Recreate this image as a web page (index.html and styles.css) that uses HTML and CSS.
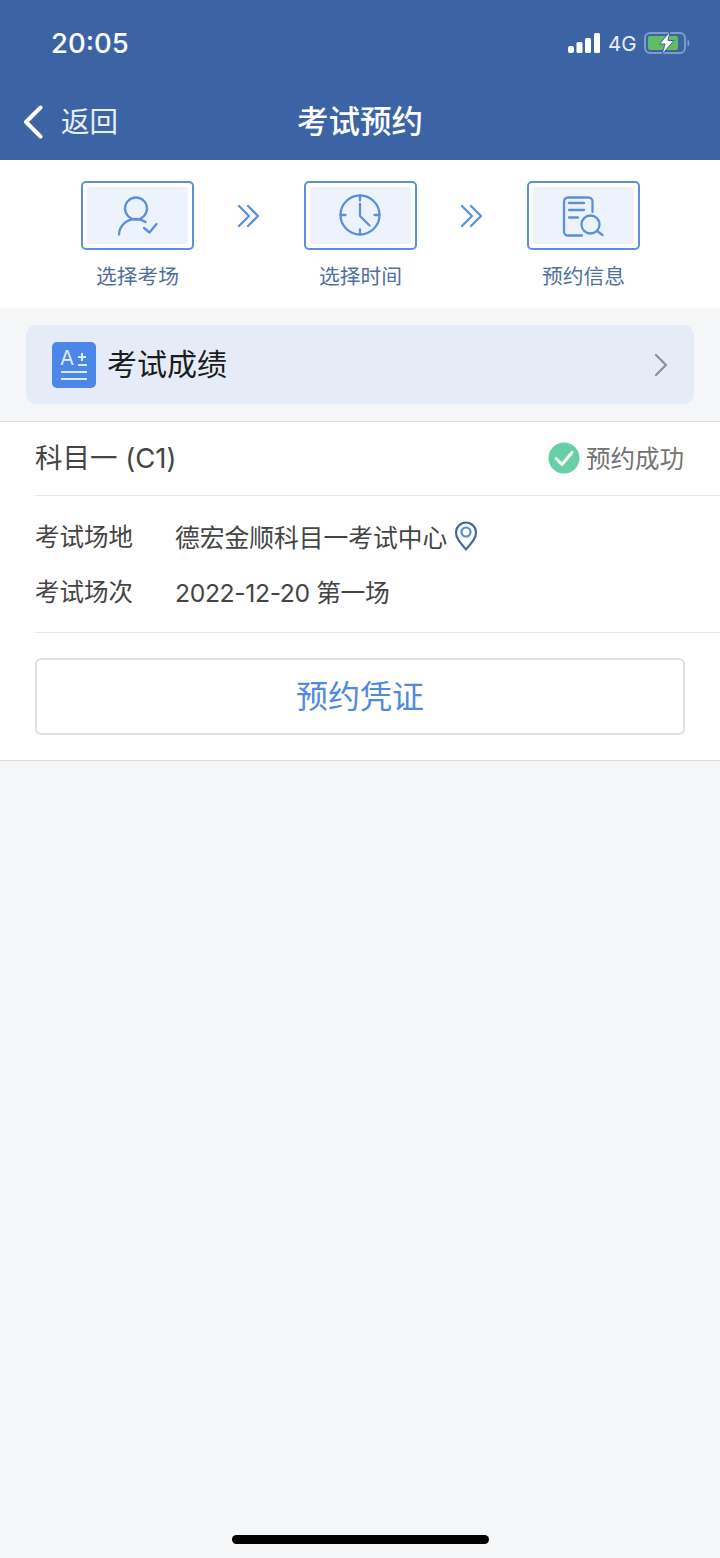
FILE: index.html
```html
<!DOCTYPE html>
<html>
  <head>
    <title>考试预约</title>
    <meta http-equiv="Content-Type" content="text/html; charset=UTF-8"/>
    <link rel="stylesheet" href="styles.css">
  </head>
  <body>
    <div class="page">
      <header class="header">
        <div class="status-bar">
          <span class="clock">20:05</span>
          <div class="status-icons">
            <svg class="signal" width="32" height="20" viewBox="0 0 32 20">
              <rect x="0" y="13" width="6" height="7" rx="2"/>
              <rect x="8.5" y="9" width="6" height="11" rx="1.5"/>
              <rect x="17" y="5" width="6" height="15" rx="1.5"/>
              <rect x="26" y="0" width="6" height="20" rx="1.5"/>
            </svg>
            <span class="network">4G</span>
            <svg class="battery" width="46" height="24" viewBox="0 0 46 24">
              <rect x="1" y="2" width="40" height="20" rx="5" fill="none" stroke="#7f9cc8" stroke-width="2"/>
              <rect x="4" y="5" width="30" height="14" rx="2" fill="#62bd62"/>
              <path d="M43.5 8.5c1.5.5 2 2 2 3.5s-.5 3-2 3.5z" fill="#7f9cc8"/>
              <path d="M26 .5L15.5 13H21l-3 10.5L30 9.5h-6z" fill="#fff" stroke="#3c64a5"/>
            </svg>
          </div>
        </div>
        <div class="nav-bar">
          <div class="back">
            <svg width="22" height="34" viewBox="0 0 22 34">
              <path d="M18.5 2.5L4 17l14.5 14.5" fill="none" stroke="#fff" stroke-width="4" stroke-linecap="round" stroke-linejoin="round"/>
            </svg>
            <span>返回</span>
          </div>
          <h1 class="nav-title">考试预约</h1>
        </div>
      </header>

      <section class="steps">
        <div class="step">
          <div class="step-box">
            <div class="step-inner">
              <svg class="step-icon" width="48" height="48" viewBox="0 0 48 48">
                <circle cx="22" cy="16.5" r="11"/>
                <path d="M5 42.5C5.5 33.500 12.500 27 22 27c3.500 0 6.500 1 9.500 3"/>
                <path d="M30 36l5.500 4.500 7-8.500"/>
              </svg>
            </div>
          </div>
          <span class="step-label">选择考场</span>
        </div>
        <div class="step-arrow">
          <svg class="step-icon" width="24" height="24" viewBox="0 0 24 24">
            <path d="M2 2l10 10L2 22M11 2l10 10-10 10"/>
          </svg>
        </div>
        <div class="step">
          <div class="step-box">
            <div class="step-inner">
              <svg class="step-icon" width="48" height="48" viewBox="0 0 48 48">
                <circle cx="23" cy="23" r="19.5"/>
                <path d="M23 3.5v5M23 37.5v5M3.5 23h5M37.5 23h5M23 12v12l9.5 9.5"/>
              </svg>
            </div>
          </div>
          <span class="step-label">选择时间</span>
        </div>
        <div class="step-arrow">
          <svg class="step-icon" width="24" height="24" viewBox="0 0 24 24">
            <path d="M2 2l10 10L2 22M11 2l10 10-10 10"/>
          </svg>
        </div>
        <div class="step">
          <div class="step-box">
            <div class="step-inner">
              <svg class="step-icon" width="48" height="48" viewBox="0 0 48 48">
                <path d="M32.5 20V9.5a4 4 0 0 0-4-4H8a4 4 0 0 0-4 4v30a4 4 0 0 0 4 4h14"/>
                <path d="M9 11h15M9 18h15M9 25.5h9"/>
                <circle cx="30.5" cy="32.5" r="9"/>
                <path d="M37 39l5.500 4"/>
              </svg>
            </div>
          </div>
          <span class="step-label">预约信息</span>
        </div>
      </section>

      <div class="score-wrap">
        <div class="score">
          <div class="score-icon">
            <span class="score-grade">A</span>
            <svg width="44" height="46" viewBox="0 0 44 46">
              <path d="M30 11v8M26 15h8M26 23h9M9 30h26M9 37h26" fill="none" stroke="#dfeafc" stroke-width="2"/>
            </svg>
          </div>
          <span class="score-text">考试成绩</span>
          <svg class="chevron" width="14" height="24" viewBox="0 0 14 24">
            <path d="M2 2l10 10L2 22" fill="none" stroke="#8b8f96" stroke-width="2.2" stroke-linecap="round" stroke-linejoin="round"/>
          </svg>
        </div>
      </div>

      <section class="card">
        <div class="card-head">
          <span class="subject">科目一 (C1)</span>
          <div class="result">
            <svg width="32" height="32" viewBox="0 0 32 32">
              <circle cx="16" cy="16" r="15.5" fill="#66cfa6"/>
              <path d="M8 16.5l6 6L24 10.5" fill="none" stroke="#fff" stroke-width="3" stroke-linecap="round" stroke-linejoin="round"/>
            </svg>
            <span>预约成功</span>
          </div>
        </div>
        <div class="card-body">
          <div class="row">
            <span class="row-label">考试场地</span>
            <span class="row-value">德宏金顺科目一考试中心</span>
            <svg class="pin" width="24" height="30" viewBox="0 0 24 30">
              <path d="M12 28.5C6 21.500 2 17 2 11.500a10 10 0 0 1 20 0C22 17 18 21.500 12 28.500z" fill="none" stroke="#44689f" stroke-width="2.2" stroke-linejoin="round"/>
              <circle cx="12" cy="11" r="4.5" fill="none" stroke="#4f8ae0" stroke-width="2.2"/>
            </svg>
          </div>
          <div class="row">
            <span class="row-label">考试场次</span>
            <span class="row-value row-date">2022-12-20 第一场</span>
          </div>
        </div>
        <div class="card-foot">
          <div class="voucher">预约凭证</div>
        </div>
      </section>

      <div class="home-bar"></div>
    </div>
  </body>
</html>
```

FILE: styles.css
```css
* {
  box-sizing: border-box;
}

body {
  margin: 0;
  font-family: 'Inter', 'Noto Sans CJK SC', sans-serif;
  background-color: #f5f6f8;
}

.page {
  display: flex;
  flex-direction: column;
  height: 1558px;
}

/* header */
.header {
  height: 160px;
  background-color: #3c64a5;
  color: #fff;
}

.status-bar {
  display: flex;
  align-items: center;
  justify-content: space-between;
  height: 86px;
  padding: 0 30px 0 51px;
}

.clock {
  font-size: 27.5px;
  font-weight: 500;
}

.status-icons {
  display: flex;
  align-items: center;
}

.signal {
  fill: #fff;
}

.network {
  width: 28px;
  margin: 0 8px;
  font-size: 20.5px;
  color: #e8eef8;
}

.nav-bar {
  display: grid;
  grid-template-columns: 1fr auto 1fr;
  align-items: center;
  height: 74px;
}

.back {
  display: flex;
  align-items: center;
  gap: 17px;
  margin-bottom: 2px;
  padding-left: 22px;
  font-size: 28.5px;
  line-height: 34px;
  color: #e8eef8;
}

.nav-title {
  margin: 0 0 8px;
  font-size: 31.5px;
  font-weight: 500;
}

/* steps */
.steps {
  display: flex;
  height: 148px;
  padding: 21px 0 0 81px;
  background-color: #fff;
}

.step {
  display: flex;
  flex-direction: column;
  align-items: center;
  width: 113px;
}

.step-box {
  width: 113px;
  height: 69px;
  padding: 4px;
  border: 2px solid #5c90dc;
  border-radius: 5px;
}

.step-inner {
  display: flex;
  align-items: center;
  justify-content: center;
  height: 100%;
  background-color: #edf3fd;
  border-radius: 3px;
}

.step-icon {
  fill: none;
  stroke: #5c90dc;
  stroke-width: 2.3;
  stroke-linecap: round;
  stroke-linejoin: round;
}

.step-label {
  margin-top: 12px;
  font-size: 20.75px;
  line-height: 30px;
  white-space: nowrap;
  color: #4f6f9f;
}

.step-arrow {
  display: flex;
  justify-content: center;
  width: 110px;
  padding-top: 23px;
}

/* score link */
.score-wrap {
  height: 114px;
  padding: 17px 26px 0;
  border-bottom: 1px solid #d9d9d9;
}

.score {
  display: flex;
  align-items: center;
  height: 79px;
  padding: 0 26px;
  background-color: #e5ecf7;
  border-radius: 10px;
}

.score-icon {
  position: relative;
  width: 44px;
  height: 46px;
  background-color: #4a87e8;
  border-radius: 5px;
}

.score-grade {
  position: absolute;
  left: 8px;
  top: 3px;
  font-size: 20.5px;
  line-height: 26px;
  color: #dfeafc;
}

.score-text {
  margin: 0 0 6px 11px;
  font-size: 30px;
  color: #1c1c1c;
}

.chevron {
  margin-left: auto;
}

/* card */
.card {
  height: 339px;
  padding-left: 35px;
  background-color: #fff;
  border-bottom: 1px solid #d9d9d9;
}

.card-head {
  display: flex;
  align-items: center;
  justify-content: space-between;
  height: 74px;
  padding-right: 35px;
  border-bottom: 1px solid #e8e8e8;
}

.subject {
  margin-bottom: 5px;
  font-size: 27.5px;
  color: #444;
}

.result {
  display: flex;
  align-items: center;
  gap: 6px;
  margin: 0 1px 2px 0;
  font-size: 24.5px;
  color: #737373;
}

.card-body {
  display: flex;
  flex-direction: column;
  gap: 8px;
  height: 137px;
  padding-top: 16px;
  border-bottom: 1px solid #e8e8e8;
}

.row {
  display: flex;
  align-items: center;
  height: 47px;
  font-size: 24.5px;
  color: #444;
}

.row-label {
  width: 140px;
}

.row-value {
  font-size: 24.75px;
}

.row-date {
  letter-spacing: -0.4px;
}

.pin {
  margin-left: 7px;
}

.card-foot {
  padding: 25px 35px 0 0;
}

.voucher {
  display: flex;
  align-items: center;
  justify-content: center;
  height: 77px;
  padding-bottom: 6px;
  font-size: 32px;
  color: #4f8ae0;
  border: 2px solid #e0e0e0;
  border-radius: 6px;
}

.home-bar {
  width: 257px;
  height: 9px;
  margin: auto auto 14px;
  background-color: #000;
  border-radius: 5px;
}
```
